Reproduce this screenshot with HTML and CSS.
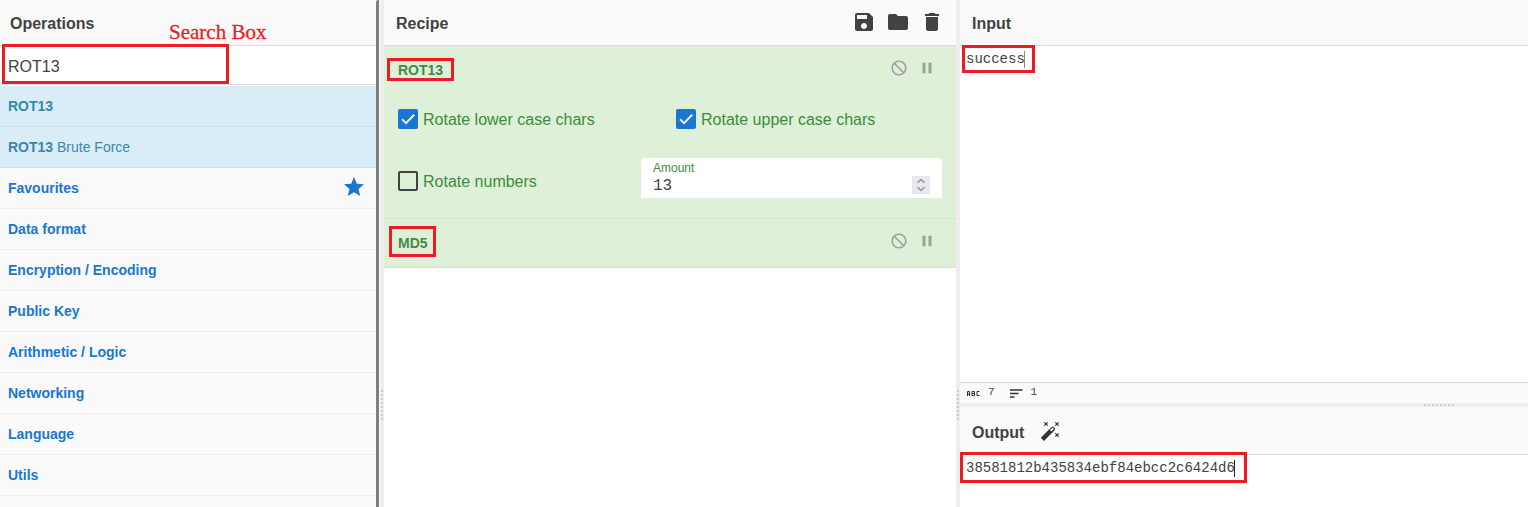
FILE: index.html
```html
<!DOCTYPE html>
<html lang="en">
<head>
<meta charset="utf-8">
<title>Recipe workspace</title>
<link rel="stylesheet" href="styles.css">
</head>
<body>
<svg class="defs" width="0" height="0">
  <symbol id="disable" viewBox="0 0 24 24"><path d="M12 2C6.480 2 2 6.480 2 12s4.480 10 10 10 10-4.480 10-10S17.520 2 12 2zM4 12c0-4.420 3.580-8 8-8 1.850 0 3.550.630 4.900 1.690L5.690 16.900C4.630 15.550 4 13.850 4 12zm8 8c-1.850 0-3.550-.630-4.900-1.690L18.310 7.100C19.370 8.450 20 10.150 20 12c0 4.420-3.580 8-8 8z" transform="matrix(-1 0 0 1 24 0)"/></symbol>
  <symbol id="pause" viewBox="0 0 24 24"><path d="M6 19h4V5H6v14zm8-14v14h4V5h-4z"/></symbol>
</svg>
<div class="app">
  <section class="operations">
    <header class="title">Operations</header>
    <div class="search">ROT13</div>
    <ul class="list">
      <li class="op"><b>ROT13</b></li>
      <li class="op"><b>ROT13</b>&nbsp;Brute Force</li>
      <li class="cat">Favourites
        <svg class="star" viewBox="0 0 24 24"><path d="M12 17.270 18.180 21l-1.640-7.030L22 9.240l-7.190-.610L12 2 9.190 8.630 2 9.240l5.460 4.730L5.820 21z"/></svg>
      </li>
      <li class="cat">Data format</li>
      <li class="cat">Encryption / Encoding</li>
      <li class="cat">Public Key</li>
      <li class="cat">Arithmetic / Logic</li>
      <li class="cat">Networking</li>
      <li class="cat">Language</li>
      <li class="cat">Utils</li>
      <li class="cat"></li>
    </ul>
    <div class="scrollbar"></div>
  </section>
  <div class="gutter"><i class="dots"></i></div>
  <section class="recipe">
    <header class="title">Recipe
      <span class="tools">
        <svg viewBox="0 0 24 24"><path d="M17 3H5c-1.110 0-2 .9-2 2v14c0 1.100.890 2 2 2h14c1.100 0 2-.9 2-2V7l-4-4zm-5 16c-1.660 0-3-1.340-3-3s1.340-3 3-3 3 1.340 3 3-1.340 3-3 3zm3-10H5V5h10v4z"/></svg>
        <svg viewBox="0 0 24 24"><path d="M10 4H4c-1.100 0-2 .9-2 2v12c0 1.100.9 2 2 2h16c1.100 0 2-.9 2-2V8c0-1.100-.9-2-2-2h-8l-2-2z"/></svg>
        <svg viewBox="0 0 24 24"><path d="M6 19c0 1.100.9 2 2 2h8c1.100 0 2-.9 2-2V7H6v12zM19 4h-3.500l-1-1h-5l-1 1H5v2h14V4z"/></svg>
      </span>
    </header>
    <div class="step rot">
      <div class="step-head"><b>ROT13</b><span class="acts"><svg><use href="#disable"/></svg><svg><use href="#pause"/></svg></span></div>
      <div class="checks">
        <label class="check"><span class="box on"><svg viewBox="0 0 20 20"><path d="M4 10.300 8 14.100 16.200 5.700"/></svg></span><span class="check-text">Rotate lower case chars</span></label>
        <label class="check"><span class="box on"><svg viewBox="0 0 20 20"><path d="M4 10.300 8 14.100 16.200 5.700"/></svg></span><span class="check-text">Rotate upper case chars</span></label>
      </div>
      <div class="args">
        <label class="check"><span class="box"></span><span class="check-text">Rotate numbers</span></label>
        <div class="amount">
          <span class="amount-label">Amount</span>
          <div class="amount-row"><span class="value">13</span>
            <span class="spin"><svg viewBox="0 0 18 18"><path d="M5.600 6.800 9 3.500 12.400 6.800M5.600 11.200 9 14.500 12.400 11.200"/></svg></span>
          </div>
        </div>
      </div>
    </div>
    <div class="step md5">
      <div class="step-head"><b>MD5</b><span class="acts"><svg><use href="#disable"/></svg><svg><use href="#pause"/></svg></span></div>
    </div>
  </section>
  <div class="gutter"><i class="dots"></i></div>
  <section class="io">
    <header class="title io-title">Input</header>
    <div class="input"><span class="caret soft">success</span></div>
    <div class="status">
      <svg class="abc" viewBox="0 0 13 5"><path d="M.5 5V.5h2V5M.5 3h2M5 .5h2.500v4H5zM5 2.500h2.500M12.500.5H10v4h2.500"/></svg>
      <span>7</span>
      <svg class="lines" viewBox="0 0 13 9"><path d="M0 1h12.500M0 4.500h8.500M0 8h4.500"/></svg>
      <span>1</span>
    </div>
    <div class="gutter-h"><i class="dots-h"></i></div>
    <header class="title out-title">Output
      <svg class="wand" viewBox="0 0 20 20">
        <path class="stick" d="M.8 16.800 11.300 6.300c.8-.8 1.700-.8 2.400-.1l.8.8c.7.700.7 1.600-.1 2.400L3.900 19.900z"/>
        <path class="tip" d="m9.900 9 2.500-2.300 1.400 1.400-2.500 2.400z"/>
        <path class="spark" d="m4.300 1.300 3.400 3.400m0-3.400L4.300 4.700M15.300 1.300l3.400 3.400m0-3.400-3.400 3.400M15.300 12.300l3.400 3.400m0-3.400-3.400 3.400"/>
      </svg>
    </header>
    <div class="output"><span class="caret">38581812b435834ebf84ebcc2c6424d6</span></div>
  </section>
</div>
<div class="mark mark-search"></div>
<div class="mark-text">Search Box</div>
<div class="mark mark-rot"></div>
<div class="mark mark-md5"></div>
<div class="mark mark-input"></div>
<div class="mark mark-output"></div>
</body>
</html>
```
FILE: styles.css
```css
* { box-sizing: border-box; }
body {
  margin: 0;
  width: 1528px;
  height: 507px;
  overflow: hidden;
  position: relative;
  background: #fff;
  color: #424242;
  font: 16px/24px "Liberation Sans", Arial, sans-serif;
}
svg { display: block; fill: currentColor; flex: none; }
.defs { position: absolute; }
.app {
  display: grid;
  grid-template-columns: 380px 4px 572px 4px 568px;
  height: 507px;
}
.title {
  height: 46px;
  flex: none;
  display: flex;
  align-items: center;
  padding: 3px 12px 0;
  background: #fafafa;
  border-bottom: 1px solid #ddd;
  font-weight: bold;
}

.operations { position: relative; height: 507px; overflow: hidden; }
.operations .title { padding-left: 10px; }
.search {
  height: 39px;
  padding: 9px 8px 0;
  border-bottom: 1px solid #ddd;
}
.list { list-style: none; margin: 1px 0 0; padding: 0; font-size: 14px; }
.list li {
  height: 41px;
  padding: 0 17px 0 8px;
  display: flex;
  align-items: center;
  justify-content: flex-start;
}
.op { background: #d9edf7; color: #3a87ad; border-bottom: 1px solid #bce8f1; }
.cat { background: #fafafa; color: #1976d2; font-weight: bold; border-bottom: 1px solid #eee; }
.star { width: 24px; height: 24px; margin: -2px -3px 0 auto; }
.scrollbar {
  position: absolute;
  right: 0;
  top: 0;
  width: 4px;
  height: 507px;
  background: #7b8080;
  border-right: 1px solid #fafafa;
  border-top-left-radius: 2px;
}

.gutter { background: #eee; display: flex; padding: 390px 1px 0; }
.dots {
  width: 2px;
  height: 30px;
  background: repeating-linear-gradient(#ccc 0 2px, transparent 2px 4px);
}

.tools { margin-left: auto; display: flex; gap: 10px; padding-bottom: 4px; }
.tools svg { width: 24px; height: 24px; }
.step { background: #dff0d8; border-bottom: 1px solid #d0e9c0; color: #388e3c; }
.rot { height: 173px; }
.md5 { height: 49px; }
.step-head {
  height: 47px;
  display: flex;
  align-items: center;
  padding: 0 20px 0 14px;
  font-size: 14px;
  color: #468847;
}
.acts { margin-left: auto; display: flex; gap: 10px; padding-bottom: 4px; color: #9e9e9e; }
.acts svg { width: 18px; height: 18px; }
.checks { display: grid; grid-template-columns: 278px 1fr; padding: 14px 14px 0; }
.check { display: flex; align-items: center; gap: 5px; height: 24px; }
.check-text { padding-top: 2px; }
.box {
  width: 20px;
  height: 20px;
  border: 2px solid #424242;
  border-radius: 2px;
  flex: none;
}
.box.on { border: 0; background: #1976d2; }
.box svg { width: 20px; height: 20px; fill: none; stroke: #eaf4e6; stroke-width: 2; }
.args { display: flex; align-items: center; justify-content: space-between; padding: 27px 14px 0; }
.args .check { padding-top: 6px; }
.amount {
  width: 301px;
  height: 40px;
  padding: 3px 12px 0;
  background: #fff;
  border-radius: 4px 4px 0 0;
}
.amount-label { display: block; font-size: 12px; line-height: 14px; }
.amount-row {
  display: flex;
  justify-content: space-between;
  align-items: center;
  height: 20px;
  font: 16px/20px "Liberation Mono", "Courier New", monospace;
  color: #424242;
}
.value { padding-top: 2px; }
.spin { width: 18px; height: 18px; background: #e9e9ed; }
.spin svg { fill: none; stroke: #8f8f9d; stroke-width: 1.4; }

.io { display: flex; flex-direction: column; height: 507px; }
.input, .output {
  font: 14px/17px "Liberation Mono", "Courier New", monospace;
  padding: 5px 6px 0;
}
.input { height: 336px; }
.caret { display: inline-block; box-shadow: inset -1px 0 #222; }
.caret.soft { box-shadow: inset -1px 0 #888; }
.status {
  height: 21px;
  display: flex;
  align-items: center;
  padding: 0 7px 2px;
  background: #fafafa;
  border-top: 1px solid #ddd;
  font: 11px/16px "Liberation Mono", "Courier New", monospace;
}
.status svg { fill: none; stroke: #333; stroke-width: 1.4; }
.status .abc { width: 13px; height: 5px; margin: 3px 8px 0 0; stroke-width: 1; }
.lines { width: 13px; height: 9px; margin: 2px 8px 0 15px; }
.gutter-h { height: 4px; background: #eee; padding: 1px 0 0 464px; flex: none; }
.dots-h {
  display: block;
  width: 30px;
  height: 2px;
  background: repeating-linear-gradient(90deg, #ccc 0 2px, transparent 2px 4px);
}
.out-title { height: 48px; padding-top: 4px; }
.wand { width: 20px; height: 20px; margin: -3px 0 0 16px; color: #333; }
.wand .tip { fill: #fafafa; }
.wand .spark { fill: none; stroke: #333; stroke-width: 1.2; }
.output { padding-top: 5px; }

.mark { position: absolute; border: 3px solid #ed1c24; }
.mark-search { left: 2px; top: 44px; width: 227px; height: 40px; }
.mark-rot { left: 387px; top: 58px; width: 67px; height: 23px; }
.mark-md5 { left: 389px; top: 226px; width: 47px; height: 31px; }
.mark-input { left: 962px; top: 45px; width: 73px; height: 28px; }
.mark-output { left: 960px; top: 452px; width: 287px; height: 31px; }
.mark-text {
  position: absolute;
  left: 169px;
  top: 20px;
  font: 21px/24px "Liberation Serif", "Times New Roman", serif;
  color: #ed1c24;
  -webkit-text-stroke: 0.3px #ed1c24;
}
```
